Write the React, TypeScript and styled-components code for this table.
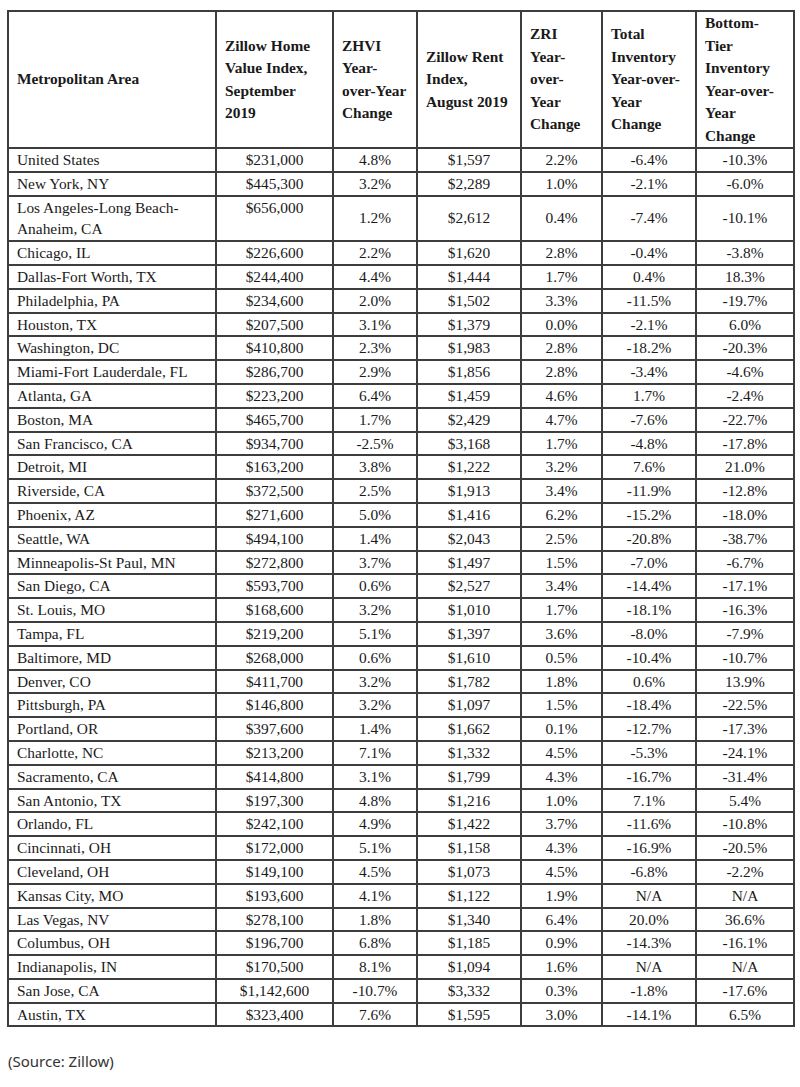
import React from "react";
import styled, { createGlobalStyle } from "styled-components";

const GlobalStyle = createGlobalStyle`
  body {
    margin: 0;
    background: #ffffff;
  }
`;

const Page = styled.div`
  padding: 10px 0 0 7px;
`;

const Table = styled.table`
  border-collapse: collapse;
  table-layout: fixed;
  width: 788px;
  font-family: "Liberation Serif", "Times New Roman", serif;
  font-size: 15.4px;
  color: #1a1a1a;
`;

const HeadCell = styled.th`
  border: 2px solid #3d3d3d;
  padding: 0 8px;
  font-family: "Liberation Serif", "Times New Roman", serif;
  font-size: 15.4px;
  line-height: 22.5px;
  text-align: left;
  vertical-align: middle;
  font-weight: bold;
`;

const Cell = styled.td<{ $left?: boolean; $top?: boolean }>`
  border: 2px solid #3d3d3d;
  padding: 0 8px;
  font-family: "Liberation Serif", "Times New Roman", serif;
  font-size: 15.4px;
  line-height: 21.8px;
  text-align: ${(props) => (props.$left ? "left" : "center")};
  vertical-align: ${(props) => (props.$top ? "top" : "middle")};
  white-space: nowrap;
`;

const AreaCell = styled(Cell)`
  white-space: normal;
`;

const Source = styled.p`
  margin: 24px 0 0 1px;
  font-family: "Noto Sans", "Open Sans", sans-serif;
  font-size: 15px;
  color: #333;
`;

const widths = [208, 117, 84, 104, 81, 94, 98];

const headers: string[][] = [
  ["Metropolitan Area"],
  ["Zillow Home", "Value Index,", "September", "2019"],
  ["ZHVI", "Year-", "over-Year", "Change"],
  ["Zillow Rent", "Index,", "August 2019"],
  ["ZRI", "Year-", "over-", "Year", "Change"],
  ["Total", "Inventory", "Year-over-", "Year", "Change"],
  ["Bottom-", "Tier", "Inventory", "Year-over-", "Year", "Change"],
];

const rows: string[][] = [
  ["United States", "$231,000", "4.8%", "$1,597", "2.2%", "-6.4%", "-10.3%"],
  ["New York, NY", "$445,300", "3.2%", "$2,289", "1.0%", "-2.1%", "-6.0%"],
  ["Los Angeles-Long Beach-Anaheim, CA", "$656,000", "1.2%", "$2,612", "0.4%", "-7.4%", "-10.1%"],
  ["Chicago, IL", "$226,600", "2.2%", "$1,620", "2.8%", "-0.4%", "-3.8%"],
  ["Dallas-Fort Worth, TX", "$244,400", "4.4%", "$1,444", "1.7%", "0.4%", "18.3%"],
  ["Philadelphia, PA", "$234,600", "2.0%", "$1,502", "3.3%", "-11.5%", "-19.7%"],
  ["Houston, TX", "$207,500", "3.1%", "$1,379", "0.0%", "-2.1%", "6.0%"],
  ["Washington, DC", "$410,800", "2.3%", "$1,983", "2.8%", "-18.2%", "-20.3%"],
  ["Miami-Fort Lauderdale, FL", "$286,700", "2.9%", "$1,856", "2.8%", "-3.4%", "-4.6%"],
  ["Atlanta, GA", "$223,200", "6.4%", "$1,459", "4.6%", "1.7%", "-2.4%"],
  ["Boston, MA", "$465,700", "1.7%", "$2,429", "4.7%", "-7.6%", "-22.7%"],
  ["San Francisco, CA", "$934,700", "-2.5%", "$3,168", "1.7%", "-4.8%", "-17.8%"],
  ["Detroit, MI", "$163,200", "3.8%", "$1,222", "3.2%", "7.6%", "21.0%"],
  ["Riverside, CA", "$372,500", "2.5%", "$1,913", "3.4%", "-11.9%", "-12.8%"],
  ["Phoenix, AZ", "$271,600", "5.0%", "$1,416", "6.2%", "-15.2%", "-18.0%"],
  ["Seattle, WA", "$494,100", "1.4%", "$2,043", "2.5%", "-20.8%", "-38.7%"],
  ["Minneapolis-St Paul, MN", "$272,800", "3.7%", "$1,497", "1.5%", "-7.0%", "-6.7%"],
  ["San Diego, CA", "$593,700", "0.6%", "$2,527", "3.4%", "-14.4%", "-17.1%"],
  ["St. Louis, MO", "$168,600", "3.2%", "$1,010", "1.7%", "-18.1%", "-16.3%"],
  ["Tampa, FL", "$219,200", "5.1%", "$1,397", "3.6%", "-8.0%", "-7.9%"],
  ["Baltimore, MD", "$268,000", "0.6%", "$1,610", "0.5%", "-10.4%", "-10.7%"],
  ["Denver, CO", "$411,700", "3.2%", "$1,782", "1.8%", "0.6%", "13.9%"],
  ["Pittsburgh, PA", "$146,800", "3.2%", "$1,097", "1.5%", "-18.4%", "-22.5%"],
  ["Portland, OR", "$397,600", "1.4%", "$1,662", "0.1%", "-12.7%", "-17.3%"],
  ["Charlotte, NC", "$213,200", "7.1%", "$1,332", "4.5%", "-5.3%", "-24.1%"],
  ["Sacramento, CA", "$414,800", "3.1%", "$1,799", "4.3%", "-16.7%", "-31.4%"],
  ["San Antonio, TX", "$197,300", "4.8%", "$1,216", "1.0%", "7.1%", "5.4%"],
  ["Orlando, FL", "$242,100", "4.9%", "$1,422", "3.7%", "-11.6%", "-10.8%"],
  ["Cincinnati, OH", "$172,000", "5.1%", "$1,158", "4.3%", "-16.9%", "-20.5%"],
  ["Cleveland, OH", "$149,100", "4.5%", "$1,073", "4.5%", "-6.8%", "-2.2%"],
  ["Kansas City, MO", "$193,600", "4.1%", "$1,122", "1.9%", "N/A", "N/A"],
  ["Las Vegas, NV", "$278,100", "1.8%", "$1,340", "6.4%", "20.0%", "36.6%"],
  ["Columbus, OH", "$196,700", "6.8%", "$1,185", "0.9%", "-14.3%", "-16.1%"],
  ["Indianapolis, IN", "$170,500", "8.1%", "$1,094", "1.6%", "N/A", "N/A"],
  ["San Jose, CA", "$1,142,600", "-10.7%", "$3,332", "0.3%", "-1.8%", "-17.6%"],
  ["Austin, TX", "$323,400", "7.6%", "$1,595", "3.0%", "-14.1%", "6.5%"],
];

function App() {
  return (
    <Page>
      <GlobalStyle />
      <Table>
        <colgroup>
          {widths.map((w, i) => (
            <col key={i} style={{ width: w }} />
          ))}
        </colgroup>
        <thead>
          <tr>
            {headers.map((lines, i) => (
              <HeadCell key={i}>
                {lines.map((line, j) => (
                  <React.Fragment key={j}>
                    {j > 0 && <br />}
                    {line}
                  </React.Fragment>
                ))}
              </HeadCell>
            ))}
          </tr>
        </thead>
        <tbody>
          {rows.map((row) => (
            <tr key={row[0]}>
              <AreaCell $left>{row[0]}</AreaCell>
              {row.slice(1).map((value, i) => (
                // the LA home value sits on the first line in the source
                <Cell key={i} $top={row[0].startsWith("Los Angeles") && i === 0}>
                  {value}
                </Cell>
              ))}
            </tr>
          ))}
        </tbody>
      </Table>
      <Source>(Source: Zillow)</Source>
    </Page>
  );
}

export default App;
